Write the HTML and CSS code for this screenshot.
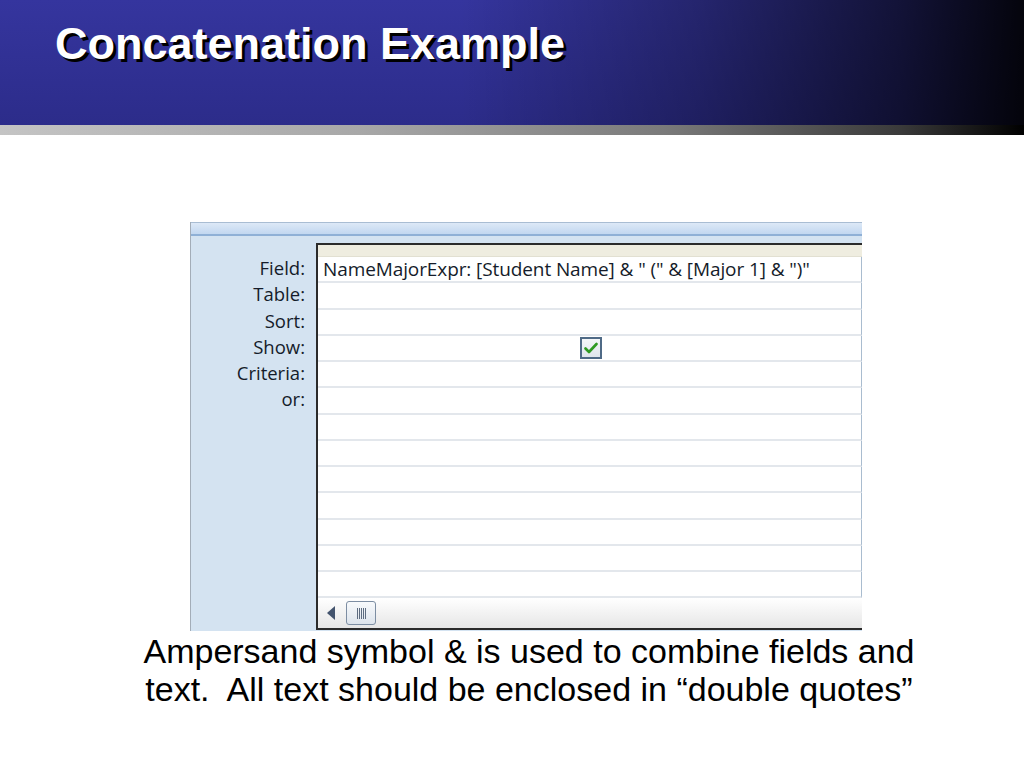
FILE: index.html
```html
<!DOCTYPE html>
<html>
<head>
<meta charset="utf-8">
<link rel="stylesheet" href="styles.css">
</head>
<body>
<header class="header">
  <h1 class="title">Concatenation Example</h1>
</header>
<div class="rule"></div>
<main class="main">
  <div class="shot">
    <div class="shot-top"></div>
    <div class="shot-body">
      <div class="labels">
        <div class="label">Field:</div>
        <div class="label">Table:</div>
        <div class="label">Sort:</div>
        <div class="label">Show:</div>
        <div class="label">Criteria:</div>
        <div class="label">or:</div>
      </div>
      <div class="grid">
        <div class="grid-head"></div>
        <div class="row"><span class="cell-text">NameMajorExpr: [Student Name] &amp; " (" &amp; [Major 1] &amp; ")"</span></div>
        <div class="row"></div>
        <div class="row"></div>
        <div class="row row-check"><span class="check"><svg width="14" height="12" viewBox="0 0 14 12"><path d="M1.5 6.5 L5 10 L12.5 2" fill="none" stroke="#2f9a22" stroke-width="2.6" stroke-linecap="round" stroke-linejoin="round"/></svg></span></div>
        <div class="row"></div>
        <div class="row"></div>
        <div class="row"></div>
        <div class="row"></div>
        <div class="row"></div>
        <div class="row"></div>
        <div class="row"></div>
        <div class="row"></div>
        <div class="row"></div>
        <div class="scroll">
          <span class="arrow"></span>
          <span class="thumb"><span class="grip"></span></span>
        </div>
      </div>
    </div>
  </div>
  <p class="caption">Ampersand symbol &amp; is used to combine fields and<br>text.&nbsp; All text should be enclosed in “double quotes”</p>
</main>
</body>
</html>
```

FILE: styles.css
```css
html, body {
  margin: 0;
  padding: 0;
}
body {
  width: 1024px;
  height: 768px;
  background: #ffffff;
  font-family: "Liberation Sans", Arial, sans-serif;
  overflow: hidden;
}
.header {
  height: 125px;
  box-sizing: border-box;
  padding: 21px 0 0 55px;
  background:
    linear-gradient(to right, rgba(0,0,0,0) 45%, rgba(0,0,0,0.3) 68%, rgba(0,0,0,0.65) 88%, rgba(0,0,0,0.92) 100%),
    linear-gradient(to bottom, #35359e 0%, #2c2c8a 100%);
}
.title {
  margin: 0;
  font-size: 45px;
  line-height: 45px;
  font-weight: bold;
  letter-spacing: 0;
  color: #ffffff;
  text-shadow: 3px 3px 0 #000000;
}
.rule {
  height: 10px;
  background: linear-gradient(to right, #c4c4c4 0%, #a8a8a8 35%, #7a7a7a 65%, #3a3a3a 88%, #000000 100%);
}
.main {
  padding-top: 87px;
}
.shot {
  width: 672px;
  height: 409px;
  margin-left: 190px;
  box-sizing: border-box;
  border-left: 1px solid #a3adb8;
  background: #d4e3f1;
  display: flex;
  flex-direction: column;
}
.shot-top {
  height: 14px;
  box-sizing: border-box;
  border-top: 1px solid #a9bdd3;
  border-bottom: 2px solid #8fb0d6;
  background: linear-gradient(to bottom, #dde9f7 0%, #c2d7f0 100%);
}
.shot-body {
  flex: 1;
  display: flex;
  padding-top: 7px;
  padding-bottom: 1px;
}
.labels {
  width: 125px;
  box-sizing: border-box;
  padding-top: 13px;
  padding-right: 11px;
  text-align: right;
  font-family: "Open Sans", "Noto Sans", sans-serif;
  font-size: 18.5px;
  color: #151c2a;
}
.label {
  height: 26.25px;
  line-height: 24px;
}
.grid {
  flex: 1;
  display: flex;
  flex-direction: column;
  background: #ffffff;
  border-top: 2px solid #2b2b2b;
  border-left: 2px solid #2b2b2b;
  border-bottom: 2px solid #2b2b2b;
}
.grid-head {
  height: 11px;
  background: #efede0;
  border-bottom: 1px solid #e2e0d2;
}
.row {
  height: 26.25px;
  box-sizing: border-box;
  border-bottom: 2px solid #e3e7ec;
  border-right: 1px solid #a9bccf;
  display: flex;
  align-items: center;
  padding-left: 5px;
}
.cell-text {
  font-family: "Open Sans", "Noto Sans", sans-serif;
  font-size: 19px;
  color: #151c2a;
  white-space: nowrap;
  letter-spacing: -0.1px;
}
.row-check {
  padding-left: 262px;
}
.check {
  width: 18px;
  height: 18px;
  border: 2px solid #4f6a86;
  background: linear-gradient(to bottom, #f4f6f8, #dfe5ec);
  display: flex;
  align-items: center;
  justify-content: center;
}
.scroll {
  flex: 1;
  display: flex;
  align-items: center;
  padding-left: 9px;
  gap: 11px;
  background: linear-gradient(to bottom, #ffffff 0%, #f0f0f0 60%, #e6e6e6 100%);
}
.arrow {
  width: 0;
  height: 0;
  border-top: 7px solid transparent;
  border-bottom: 7px solid transparent;
  border-right: 8px solid #44546e;
}
.thumb {
  width: 30px;
  height: 24px;
  box-sizing: border-box;
  border: 1px solid #7d8ea3;
  border-radius: 3px;
  background: linear-gradient(to bottom, #f8fafc, #dde4ec);
  display: flex;
  align-items: center;
  justify-content: center;
}
.grip {
  width: 9px;
  height: 11px;
  background: repeating-linear-gradient(to right, #5d6c80 0, #5d6c80 1px, transparent 1px, transparent 2px);
}
.caption {
  margin: 1px 0 0 0;
  padding-left: 34px;
  text-align: center;
  font-size: 34px;
  line-height: 38px;
  color: #000000;
}
```
